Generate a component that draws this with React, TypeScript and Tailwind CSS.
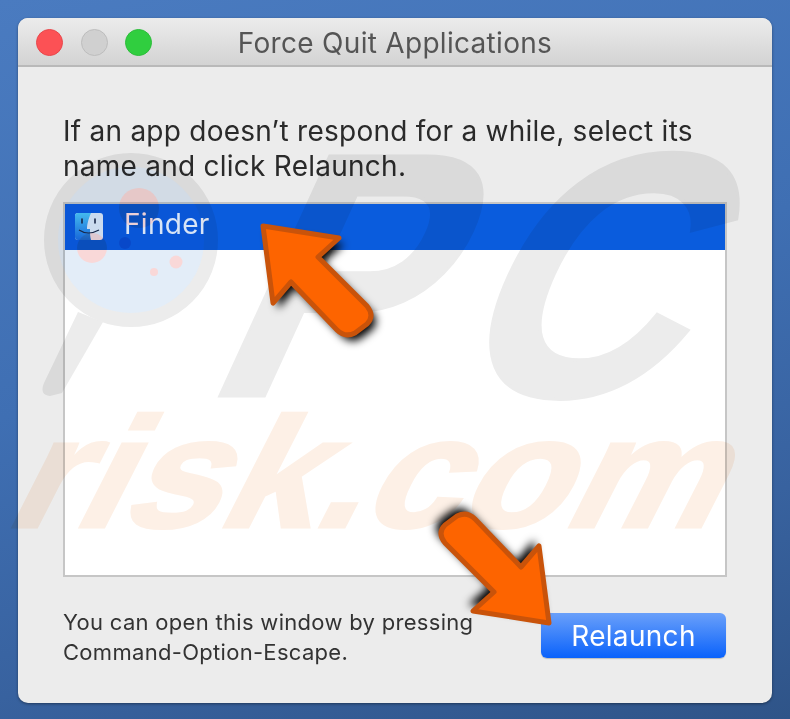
export default function App() {
  return (
    <div className="relative w-[790px] h-[719px] overflow-hidden p-[18px] pb-4 bg-[linear-gradient(165deg,#4a7bc0_0%,#3f6fb3_45%,#38629f_75%,#2f5488_100%)] font-['Inter','Liberation_Sans',sans-serif]">
      <div className="flex flex-col h-[685px] w-[754px] rounded-[10px] overflow-hidden bg-[#ececec] shadow-[0_1px_3px_rgba(0,0,0,0.4)]">
        {/* title bar */}
        <div className="relative flex items-center justify-center h-[49px] shrink-0 border-b-2 border-[#b9b9b9] bg-[linear-gradient(#ececec,#d3d3d3)]">
          <div className="absolute left-[18px] top-[11px] flex gap-[17.5px]">
            <span className="w-[27px] h-[27px] rounded-full bg-[#fc5155] border border-[#e8474b]" />
            <span className="w-[27px] h-[27px] rounded-full bg-[#d0d0d0] border border-[#bdbdbd]" />
            <span className="w-[27px] h-[27px] rounded-full bg-[#30ce3f] border border-[#2cbd3a]" />
          </div>
          <span className="mt-[3px] text-[28px] leading-none text-[#555] tracking-[0.3px]">Force Quit Applications</span>
        </div>

        <div className="flex flex-col flex-1 pl-[45px] pr-[45px] pt-[47px]">
          <p className="text-[28px] leading-[35px] text-[#2a2a2a] w-[680px] tracking-[0.25px]">
            If an app doesn’t respond for a while, select its<br />name and click Relaunch.
          </p>

          <div className="mt-[18px] h-[375px] border-2 border-[#c6c6c6] bg-white">
            <div className="flex items-center h-[46px] bg-[#0a5cdd] pl-[9px]">
              <FinderIcon />
              <span className="ml-[20px] -mt-[6px] text-[28px] leading-none text-[#f2f6fd] tracking-[0.3px]">Finder</span>
            </div>
          </div>

          <div className="flex items-start justify-between mt-[30px]">
            <p className="text-[22px] leading-[30px] text-[#333] tracking-[0.3px]">
              You can open this window by pressing<br />Command-Option-Escape.
            </p>
            <button className="w-[185px] h-[45px] mt-[6px] mr-px rounded-[6px] text-[28px] leading-none text-white tracking-[0.3px] bg-[linear-gradient(#6aa0fa,#0a62fb)] shadow-[0_1px_1px_rgba(0,0,0,0.2)]">
              Relaunch
            </button>
          </div>
        </div>
      </div>

      {/* pcrisk watermark */}
      <div className="absolute inset-0 pointer-events-none mix-blend-multiply">
        <svg className="absolute left-0 top-0" width="790" height="719" viewBox="0 0 790 719">
          <path d="M78 312 L44 383 Q39 395 50 396 L62 393 L103 322 Z" fill="#ececec" />
          <circle cx="131" cy="240" r="80" fill="#e3edf8" stroke="#ececec" strokeWidth="14" />
          <circle cx="139" cy="208" r="20" fill="#f9d8d8" />
          <circle cx="92" cy="248" r="15" fill="#f9d8d8" />
          <circle cx="176" cy="262" r="6.5" fill="#f9d8d8" />
          <circle cx="154" cy="272" r="4" fill="#f9d8d8" />
          <circle cx="125" cy="243" r="6" fill="#c0c8e8" />
        </svg>
        <span className="absolute left-[198px] top-[150px] text-[349px] leading-[0.72] font-bold font-['Liberation_Sans',sans-serif] text-[#ececec] whitespace-nowrap origin-[0_247px] [transform:skewX(-24.6deg)_scaleX(0.9)] [-webkit-text-stroke:3px_#ececec]">
          <span className="tracking-[36px]">P</span>C
        </span>
        <span className="absolute left-px top-[416px] text-[157px] leading-[0.72] font-bold font-['Liberation_Sans',sans-serif] text-[#fdf0e6] whitespace-nowrap origin-[0_111px] [transform:skewX(-27deg)_scaleX(1.1)] [-webkit-text-stroke:3px_#fdf0e6]">risk.com</span>
      </div>

      {/* arrows */}
      <Arrow className="absolute left-[245px] top-[210px]" rotate={0} />
      <Arrow className="absolute left-[427px] top-[499px]" rotate={180} />
    </div>
  )
}

function FinderIcon() {
  return (
    <svg width="30" height="30" viewBox="0 0 30 30">
      <defs>
        <linearGradient id="finderL" x1="0" y1="0" x2="0" y2="1">
          <stop offset="0" stopColor="#4cc8f5" />
          <stop offset="1" stopColor="#1a6fe0" />
        </linearGradient>
      </defs>
      <rect x="1" y="1" width="28" height="27" rx="3" fill="#e4ecf6" />
      <path d="M4 1 H17 C14 8 13 13 13 17 L16 17 C16 21 16 25 17 28 H4 Q1 28 1 25 V4 Q1 1 4 1 Z" fill="url(#finderL)" />
      <path d="M8 7 V11 M21 7 V11" stroke="#1b2a4a" strokeWidth="1.6" strokeLinecap="round" />
      <path d="M5 18 Q14 24 25 18" stroke="#1b2a4a" strokeWidth="1.2" fill="none" />
    </svg>
  )
}

const arrowPath = 'M18 16 L94 28 L73 47 L122 96 Q130 106 122 114 L110 123 Q100 128 92 120 L46 72 L28 93 Z'

function Arrow({ className, rotate }: { className: string; rotate: number }) {
  return (
    <svg className={className} width="140" height="140" viewBox="0 0 140 140" style={{ overflow: 'visible', transform: `rotate(${rotate}deg)` }}>
      <defs>
        <filter id={`arrowGlow${rotate}`} x="-30%" y="-30%" width="160%" height="160%">
          <feGaussianBlur stdDeviation="4" />
        </filter>
      </defs>
      <path d={arrowPath} fill="#000" transform="translate(5 6)" filter={`url(#arrowGlow${rotate})`} />
      <path d={arrowPath} fill="#fd6400" stroke="#c9530a" strokeWidth="5" strokeLinejoin="round" />
    </svg>
  )
}
